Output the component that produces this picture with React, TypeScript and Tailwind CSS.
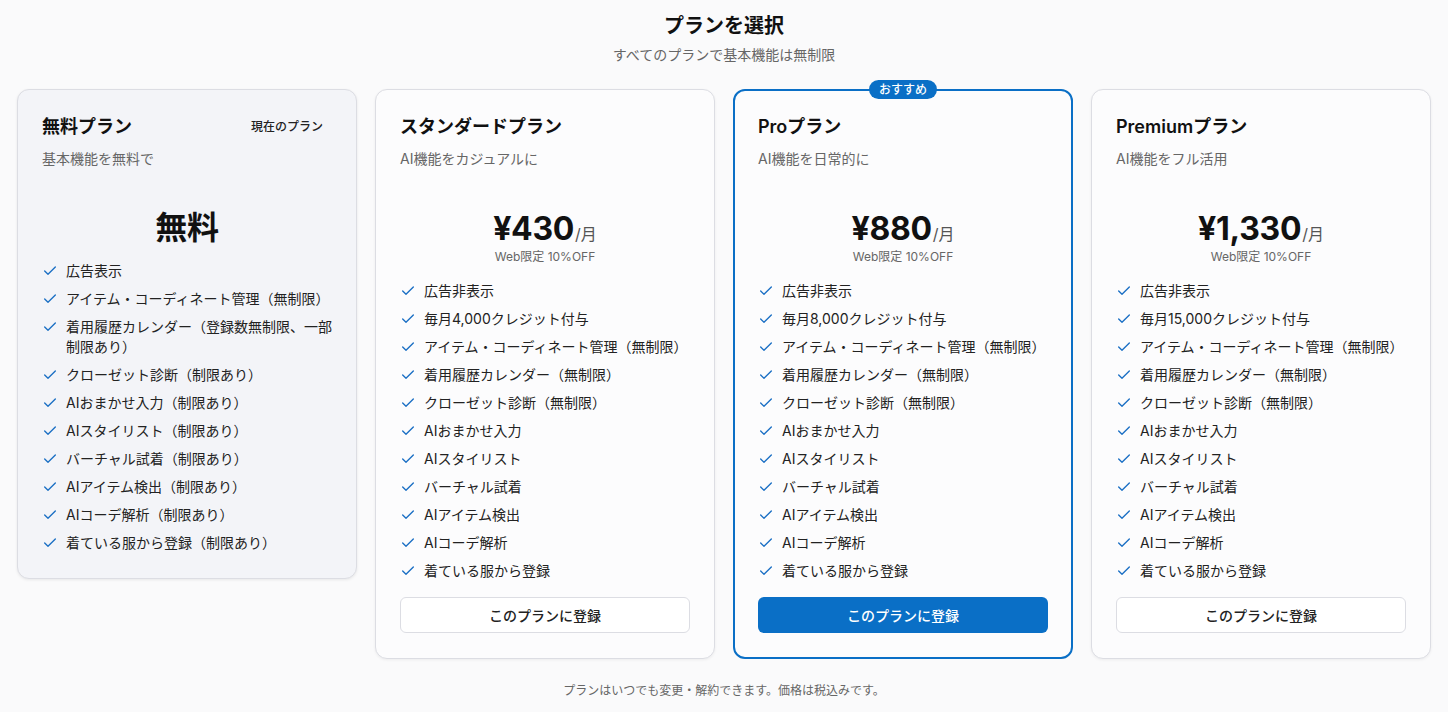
import React from "react";

const Check = () => (
  <svg width="16" height="16" viewBox="0 0 24 24" fill="none" stroke="#1a6fc4" strokeWidth="2" strokeLinecap="round" strokeLinejoin="round" className="shrink-0 mt-[2px]">
    <path d="M20 6 9 17l-5-5" />
  </svg>
);

type Plan = {
  name: string;
  desc: string;
  price: string;
  web: boolean;
  features: string[];
  current?: boolean;
  recommended?: boolean;
};

const plans: Plan[] = [
  {
    name: "無料プラン",
    desc: "基本機能を無料で",
    price: "無料",
    web: false,
    current: true,
    features: [
      "広告表示",
      "アイテム・コーディネート管理（無制限）",
      "着用履歴カレンダー（登録数無制限、一部制限あり）",
      "クローゼット診断（制限あり）",
      "AIおまかせ入力（制限あり）",
      "AIスタイリスト（制限あり）",
      "バーチャル試着（制限あり）",
      "AIアイテム検出（制限あり）",
      "AIコーデ解析（制限あり）",
      "着ている服から登録（制限あり）",
    ],
  },
  {
    name: "スタンダードプラン",
    desc: "AI機能をカジュアルに",
    price: "¥430",
    web: true,
    features: [
      "広告非表示",
      "毎月4,000クレジット付与",
      "アイテム・コーディネート管理（無制限）",
      "着用履歴カレンダー（無制限）",
      "クローゼット診断（無制限）",
      "AIおまかせ入力",
      "AIスタイリスト",
      "バーチャル試着",
      "AIアイテム検出",
      "AIコーデ解析",
      "着ている服から登録",
    ],
  },
  {
    name: "Proプラン",
    desc: "AI機能を日常的に",
    price: "¥880",
    web: true,
    recommended: true,
    features: [
      "広告非表示",
      "毎月8,000クレジット付与",
      "アイテム・コーディネート管理（無制限）",
      "着用履歴カレンダー（無制限）",
      "クローゼット診断（無制限）",
      "AIおまかせ入力",
      "AIスタイリスト",
      "バーチャル試着",
      "AIアイテム検出",
      "AIコーデ解析",
      "着ている服から登録",
    ],
  },
  {
    name: "Premiumプラン",
    desc: "AI機能をフル活用",
    price: "¥1,330",
    web: true,
    features: [
      "広告非表示",
      "毎月15,000クレジット付与",
      "アイテム・コーディネート管理（無制限）",
      "着用履歴カレンダー（無制限）",
      "クローゼット診断（無制限）",
      "AIおまかせ入力",
      "AIスタイリスト",
      "バーチャル試着",
      "AIアイテム検出",
      "AIコーデ解析",
      "着ている服から登録",
    ],
  },
];

function Card({ p }: { p: Plan }) {
  const base = p.current
    ? "bg-[#f3f4f8] border border-[#dcdde3] shadow-[0_1px_3px_rgba(0,0,0,0.08)]"
    : p.recommended
    ? "bg-[#fcfcfd] border-2 border-[#0a6fc6]"
    : "bg-[#fcfcfd] border border-[#dcdde3] shadow-[0_1px_3px_rgba(0,0,0,0.06)]";
  return (
    <div className={`relative rounded-xl ${base} ${p.recommended ? "px-[23px] pt-[22px] pb-[24px]" : "px-6 pt-[23px] pb-[25px]"}`}>
      {p.recommended && (
        <div className="absolute left-1/2 -translate-x-1/2 top-[-11px] h-[19px] px-[10px] rounded-full bg-[#0a6fc6] text-white text-[12px] leading-[19px] font-medium">
          おすすめ
        </div>
      )}
      <div className="flex items-center justify-between h-7">
        <div className="text-[18px] leading-7 font-semibold text-[#111]">{p.name}</div>
        {p.current && <div className="text-[12px] leading-4 font-medium text-[#222] px-[9px]">現在のプラン</div>}
      </div>
      <div className="mt-2 text-[14px] leading-5 text-[#666]">{p.desc}</div>
      <div className={`text-center ${p.web ? "mt-10" : "mt-[39px]"}`}>
        <div className="flex items-baseline justify-center h-10">
          <span className="text-[32px] leading-10 font-bold text-[#111] tracking-[-0.3px]">{p.price}</span>
          {p.web && <span className="text-[16px] text-[#555] ml-[1px]">/月</span>}
        </div>
        {p.web && <div className="text-[12px] leading-4 text-[#666]">Web限定 10%OFF</div>}
      </div>
      <ul className={`${p.web ? "mt-4" : "mt-[13px]"} flex flex-col gap-2`}>
        {p.features.map((f) => (
          <li key={f} className="flex gap-2 text-[14px] leading-5 text-[#222]">
            <Check />
            <span>{f}</span>
          </li>
        ))}
      </ul>
      {!p.current && (
        <button
          className={`mt-4 w-full h-9 rounded-md text-[14px] font-medium ${
            p.recommended
              ? "bg-[#0a6fc6] text-white"
              : "bg-white border border-[#dcdde3] text-[#222]"
          }`}
        >
          このプランに登録
        </button>
      )}
    </div>
  );
}

export default function App() {
  return (
    <div
      className="min-h-[712px] bg-[#fafafb] px-[17px] pt-[12px]"
      style={{ fontFamily: '"Inter", "Noto Sans CJK JP", sans-serif' }}
    >
      <div className="text-center">
        <h1 className="text-[20px] leading-7 font-bold text-[#111]">プランを選択</h1>
        <p className="mt-[5px] text-[14px] leading-5 text-[#666]">すべてのプランで基本機能は無制限</p>
      </div>
      <div className="mt-[24px] grid grid-cols-4 gap-[18px] items-start">
        {plans.map((p) => (
          <Card key={p.name} p={p} />
        ))}
      </div>
      <p className="mt-[24px] text-center text-[12px] leading-4 text-[#666]">
        プランはいつでも変更・解約できます。価格は税込みです。
      </p>
    </div>
  );
}
